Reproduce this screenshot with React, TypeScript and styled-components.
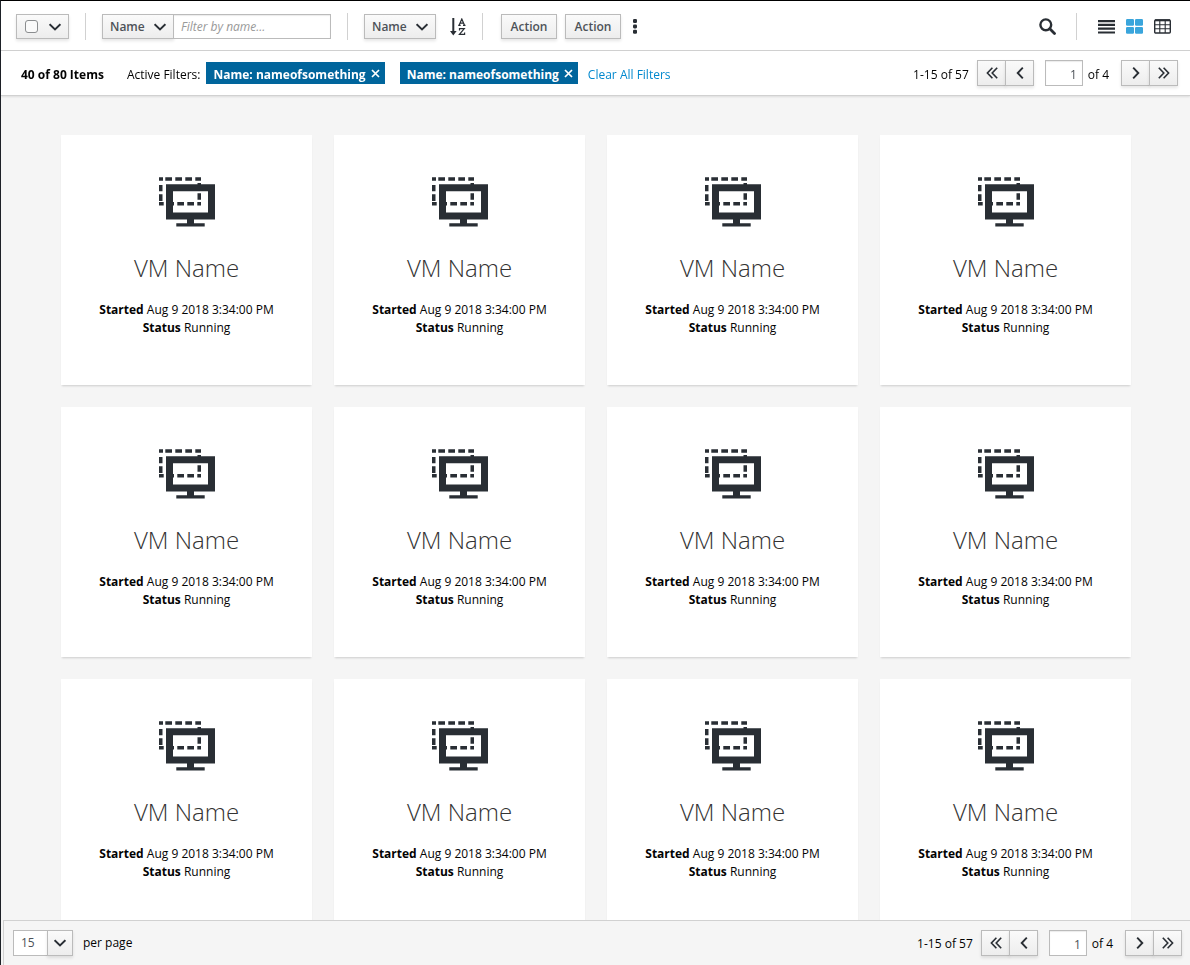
import React from "react";
import styled, { createGlobalStyle, css } from "styled-components";

const ink = "#292e34";
const border = "#bbb";

const GlobalStyle = createGlobalStyle`
  *, *::before, *::after { box-sizing: border-box; }
  body { margin: 0; background: #f5f5f5; }
  body, button, input, select {
    font-family: "Open Sans", "Noto Sans", sans-serif;
    font-size: 12px;
    line-height: 18px;
    color: #030303;
  }
  button, input, select { margin: 0; border-radius: 0; }
`;

const raised = css`
  border: 1px solid ${border};
  background: linear-gradient(to bottom, #fafafa 0%, #ededed 100%);
  box-shadow: 0 2px 3px rgba(3, 3, 3, 0.1);
  color: #4d5258;
  font-weight: 600;
`;

const Page = styled.div`
  display: flex;
  flex-direction: column;
  height: 100vh;
  border-top: 1px solid #000;
  border-left: 1px solid #1d2127;
`;

const Toolbar = styled.header`
  display: flex;
  align-items: center;
  flex: none;
  height: 50px;
  padding: 2px 19px 0 15px;
  border-bottom: 1px solid #d1d1d1;
  background: #fff;
`;

const Divider = styled.span`
  flex: none;
  width: 1px;
  height: 27px;
  margin: 0 16px;
  background: #d1d1d1;
`;

const Group = styled.div<{ $gap?: number; $inset?: number }>`
  display: flex;
  align-items: center;
  gap: ${(p) => p.$gap ?? 0}px;
  padding-left: ${(p) => p.$inset ?? 0}px;
`;

const EndGroup = styled(Group)`
  margin-left: auto;
  padding-right: 4px;
`;

const OverflowGroup = styled(Group)`
  margin-left: 12px;
`;

const Button = styled.button`
  ${raised}
  min-width: 56px;
  height: 25px;
  padding: 0 8px;
  line-height: 23px;
  cursor: pointer;
`;

const BulkSelect = styled.div`
  ${raised}
  display: flex;
  align-items: center;
  justify-content: space-between;
  width: 53px;
  height: 25px;
  padding: 0 7px 0 8px;
`;

const Checkbox = styled.input`
  appearance: none;
  width: 13px;
  height: 13px;
  border: 1px solid #8b8d8f;
  border-radius: 3px;
  background: #fafafa;
  &:checked { background: #39a5dc; }
`;

const IconButton = styled.button<{ $active?: boolean }>`
  display: flex;
  align-items: center;
  justify-content: center;
  padding: 0;
  border: 0;
  background: none;
  color: ${(p) => (p.$active ? "#39a5dc" : ink)};
  cursor: pointer;
`;

const SelectBox = styled.span`
  display: inline-grid;
  align-items: center;
  color: ${ink};
  > * { grid-area: 1 / 1; }
  > svg {
    justify-self: end;
    margin-right: 8px;
    pointer-events: none;
  }
`;

const Select = styled.select`
  ${raised}
  appearance: none;
  width: 72px;
  height: 25px;
  padding: 0 24px 0 7px;
  line-height: 23px;
`;

const FilterInput = styled.input`
  width: 158px;
  height: 25px;
  margin-left: -1px;
  padding: 0 7px;
  border: 1px solid ${border};
  background: #fff;
  box-shadow: inset 0 1px 1px rgba(3, 3, 3, 0.08);
  &::placeholder {
    color: #999;
    font-style: italic;
    opacity: 1;
  }
`;

const Pager = styled.nav`
  display: flex;
  align-items: center;
  margin-left: auto;
`;

const PagerText = styled.span`
  padding-top: 2px;
`;

const FilterBar = styled.section`
  display: flex;
  align-items: center;
  flex: none;
  position: relative;
  height: 45px;
  padding: 0 12px 0 20px;
  border-bottom: 1px solid #d1d1d1;
  background: #fff;
  box-shadow: 0 1px 2px rgba(3, 3, 3, 0.1);
  > strong, > span, > a, ${PagerText} {
    padding-top: 4px;
  }
`;

const FilterLabel = styled.span`
  margin: 0 6px 0 23px;
`;

const Chips = styled.ul`
  display: flex;
  gap: 15px;
  margin: 0 10px 0 0;
  padding: 0;
  list-style: none;
`;

const Chip = styled.li`
  display: flex;
  align-items: center;
  gap: 5px;
  height: 22px;
  padding: 1px 5px 0 7px;
  background: #00659c;
  color: #fff;
  font-weight: 700;
`;

const ChipText = styled.span`
  padding-top: 2px;
`;

const ChipClose = styled.button`
  display: flex;
  padding: 0;
  border: 0;
  background: none;
  color: inherit;
  cursor: pointer;
`;

const Link = styled.a`
  color: #0088ce;
  text-decoration: none;
`;

const PagerButtons = styled.div`
  display: flex;
  margin-left: 8px;
`;

const NextButtons = styled(PagerButtons)`
  margin-left: 12px;
`;

const PagerButton = styled.button`
  ${raised}
  display: flex;
  align-items: center;
  justify-content: center;
  width: 29px;
  height: 26px;
  padding: 0 0 0 1px;
  color: ${ink};
  cursor: pointer;
  & + & {
    margin-left: -1px;
  }
`;

const PageInput = styled.input`
  width: 38px;
  height: 26px;
  margin: 0 5px 0 11px;
  padding: 2px 5px 0;
  border: 1px solid ${border};
  background: #fff;
  box-shadow: inset 0 1px 1px rgba(3, 3, 3, 0.08);
  color: #4d5258;
  text-align: right;
`;

const Content = styled.main`
  flex: 1;
  min-height: 0;
  overflow-y: auto;
  scrollbar-width: none;
  padding: 39px 59px 40px 60px;
  background: #f5f5f5;
`;

const CardGrid = styled.div`
  display: grid;
  grid-template-columns: repeat(auto-fill, minmax(240px, 1fr));
  gap: 22px;
`;

const Card = styled.article`
  display: flex;
  flex-direction: column;
  align-items: center;
  min-height: 250px;
  padding: 42px 16px 20px;
  background: #fff;
  box-shadow: 0 2px 2px -1px rgba(3, 3, 3, 0.17);
  text-align: center;
`;

const CardTitle = styled.h2`
  margin: 24px 0 16px;
  color: #333;
  font-size: 24px;
  font-weight: 300;
  line-height: 34px;
`;

const CardText = styled.p`
  margin: 0;
`;

const Footer = styled.footer`
  display: flex;
  align-items: center;
  flex: none;
  height: 45px;
  margin-left: 2px;
  padding: 0 8px 0 9px;
  border-top: 1px solid #d1d1d1;
  border-left: 1px solid #d1d1d1;
  background: #f5f5f5;
`;

const PerPage = styled.label`
  display: flex;
  align-items: center;
  gap: 10px;
`;

const PerPageBox = styled.span`
  display: inline-grid;
  > * { grid-area: 1 / 1; }
`;

const PerPageSelect = styled.select`
  appearance: none;
  width: 60px;
  height: 26px;
  padding: 0 30px 0 7px;
  border: 1px solid ${border};
  background: #fff;
  color: #4d5258;
`;

const PerPageArrow = styled.span`
  ${raised}
  display: flex;
  align-items: center;
  justify-content: center;
  justify-self: end;
  width: 26px;
  height: 26px;
  color: ${ink};
  pointer-events: none;
`;

const Stroke = ({ w, h, d, width = 1.9 }: { w: number; h: number; d: string; width?: number }) => (
  <svg width={w} height={h} viewBox={`0 0 ${w} ${h}`} fill="none" stroke="currentColor" strokeWidth={width} aria-hidden="true">
    <path d={d} />
  </svg>
);

const ChevronDown = () => <Stroke w={12} h={8} d="M.6 1.2 6 6.4l5.4-5.2" />;
const ChevronLeft = () => <Stroke w={8} h={12} d="M6.8.7 1.7 6l5.1 5.3" />;
const ChevronRight = () => <Stroke w={8} h={12} d="M1.2.7 6.3 6l-5.1 5.3" />;
const DoubleLeft = () => <Stroke w={12} h={12} d="M6.4.7 1.4 6l5 5.3M11.2.7l-5 5.3 5 5.3" width={1.6} />;
const DoubleRight = () => <Stroke w={12} h={12} d="M.8.7l5 5.3-5 5.3M5.6.7l5 5.3-5 5.3" width={1.6} />;
const Cross = () => <Stroke w={9} h={9} d="M1 1l7 7M8 1 1 8" width={1.7} />;

const SortIcon = () => (
  <svg width="16" height="18" viewBox="0 0 16 18" fill="none" stroke="currentColor" aria-hidden="true">
    <path d="M3.3 0v14" strokeWidth="2" />
    <path d="M0 13h6.6l-3.3 4.5z" fill="currentColor" stroke="none" />
    <path d="M9.2 7 11.8 1l2.6 6M10 5.2h3.6M8.2 7.4h2.5M13 7.4h2.5" strokeWidth="1.2" />
    <path d="M9.5 12.4v-1.8h4.8l-4.9 5.8h5.2v-1.8" strokeWidth="1.2" />
  </svg>
);

const KebabIcon = () => (
  <svg width="4" height="15" viewBox="0 0 4 15" fill="currentColor" aria-hidden="true">
    <rect width="4" height="4" rx="1.3" />
    <rect y="5.4" width="4" height="4" rx="1.3" />
    <rect y="10.8" width="4" height="4" rx="1.3" />
  </svg>
);

const SearchIcon = () => (
  <svg width="17" height="17" viewBox="0 0 17 17" fill="none" stroke="currentColor" aria-hidden="true">
    <circle cx="6.8" cy="6.8" r="5.4" strokeWidth="2.4" />
    <path d="m10.8 10.8 4.7 4.7" strokeWidth="2.8" strokeLinecap="round" />
  </svg>
);

const ListIcon = () => (
  <svg width="17" height="14" viewBox="0 0 17 14" fill="currentColor" aria-hidden="true">
    <path d="M0 0h17v2.2H0zM0 3.8h17V6H0zM0 7.6h17v2.2H0zM0 11.4h17v2.2H0z" />
  </svg>
);

const TilesIcon = () => (
  <svg width="17" height="15" viewBox="0 0 17 15" fill="currentColor" aria-hidden="true">
    <rect width="8" height="6.8" rx="1.2" />
    <rect x="9" width="8" height="6.8" rx="1.2" />
    <rect y="7.9" width="8" height="6.8" rx="1.2" />
    <rect x="9" y="7.9" width="8" height="6.8" rx="1.2" />
  </svg>
);

const TableIcon = () => (
  <svg width="17" height="15" viewBox="0 0 17 15" fill="none" stroke="currentColor" aria-hidden="true">
    <rect x=".7" y="1" width="15.6" height="13" rx="1" strokeWidth="1.4" />
    <path d="M1 1.3h15" strokeWidth="2" />
    <path d="M1 5.7h15M1 9.8h15M5.8 1v13M11.2 1v13" strokeWidth="1.1" />
  </svg>
);

const VmIcon = () => (
  <svg width="56" height="50" viewBox="0 0 56 50" fill={ink} aria-hidden="true">
    <path d="M0 .3h4v3.4H0zM6.3.3H13v3.4H6.3zM16.3.3H23v3.4h-6.7zM26.3.3H33v3.4h-6.7zM36.3.3H42v3.4h-5.7z" />
    <path d="M0 8h3.5v6.3H0zM0 17.3h3.5V24H0zM38.5 6H42v2h-3.5zM38.5 16.2H42v6.6h-3.5z" />
    <path d="M0 25h4.7v3.5H0zM12 25h3v3.5h-3zM18.3 25H25v3.5h-6.7zM28.3 25H35v3.5h-6.7zM38.3 25H42v3.5h-3.7z" />
    <path fillRule="evenodd" d="M7 7.2h49v35.3H7zM14 14.2v21.2h35V14.2z" />
    <path d="M28 42h7v4.2h10.7V49.6H17.3v-3.4H28z" />
  </svg>
);

const Pagination = ({ label }: { label: string }) => (
  <Pager aria-label={label}>
    <PagerText>1-15 of 57</PagerText>
    <PagerButtons>
      <PagerButton type="button" aria-label="First page"><DoubleLeft /></PagerButton>
      <PagerButton type="button" aria-label="Previous page"><ChevronLeft /></PagerButton>
    </PagerButtons>
    <PageInput type="text" aria-label="Current page" defaultValue="1" />
    <PagerText>of 4</PagerText>
    <NextButtons>
      <PagerButton type="button" aria-label="Next page"><ChevronRight /></PagerButton>
      <PagerButton type="button" aria-label="Last page"><DoubleRight /></PagerButton>
    </NextButtons>
  </Pager>
);

const NameSelect = ({ label }: { label: string }) => (
  <SelectBox>
    <Select aria-label={label} defaultValue="Name">
      <option>Name</option>
    </Select>
    <ChevronDown />
  </SelectBox>
);

const filters = ["nameofsomething", "nameofsomething"];

const machines = Array.from({ length: 12 }, (_, id) => ({
  id,
  name: "VM Name",
  started: "Aug 9 2018 3:34:00 PM",
  status: "Running",
}));

export default function App() {
  return (
    <>
      <GlobalStyle />
      <Page>
        <Toolbar>
          <BulkSelect>
            <Checkbox type="checkbox" aria-label="Select all items" />
            <IconButton type="button" aria-label="Selection options"><ChevronDown /></IconButton>
          </BulkSelect>
          <Divider />
          <Group>
            <NameSelect label="Filter by" />
            <FilterInput type="text" aria-label="Filter by name" placeholder="Filter by name..." />
          </Group>
          <Divider />
          <Group $gap={14}>
            <NameSelect label="Sort by" />
            <IconButton type="button" aria-label="Sort ascending"><SortIcon /></IconButton>
          </Group>
          <Divider />
          <Group $gap={8} $inset={2}>
            <Button type="button">Action</Button>
            <Button type="button">Action</Button>
          </Group>
          <OverflowGroup>
            <IconButton type="button" aria-label="More actions"><KebabIcon /></IconButton>
          </OverflowGroup>
          <EndGroup>
            <IconButton type="button" aria-label="Search"><SearchIcon /></IconButton>
          </EndGroup>
          <Divider />
          <Group $gap={11} $inset={5}>
            <IconButton type="button" aria-label="List view"><ListIcon /></IconButton>
            <IconButton type="button" aria-label="Card view" $active><TilesIcon /></IconButton>
            <IconButton type="button" aria-label="Table view"><TableIcon /></IconButton>
          </Group>
        </Toolbar>

        <FilterBar>
          <strong>40 of 80 Items</strong>
          <FilterLabel>Active Filters:</FilterLabel>
          <Chips>
            {filters.map((value, i) => (
              <Chip key={i}>
                <ChipText>Name: {value}</ChipText>
                <ChipClose type="button" aria-label={`Remove filter ${value}`}><Cross /></ChipClose>
              </Chip>
            ))}
          </Chips>
          <Link href="#">Clear All Filters</Link>
          <Pagination label="Top pagination" />
        </FilterBar>

        <Content>
          <CardGrid>
            {machines.map((vm) => (
              <Card key={vm.id}>
                <VmIcon />
                <CardTitle>{vm.name}</CardTitle>
                <CardText><strong>Started</strong> {vm.started}</CardText>
                <CardText><strong>Status</strong> {vm.status}</CardText>
              </Card>
            ))}
          </CardGrid>
        </Content>

        <Footer>
          <PerPage>
            <PerPageBox>
              <PerPageSelect defaultValue="15">
                <option>15</option>
              </PerPageSelect>
              <PerPageArrow><ChevronDown /></PerPageArrow>
            </PerPageBox>
            per page
          </PerPage>
          <Pagination label="Bottom pagination" />
        </Footer>
      </Page>
    </>
  );
}
